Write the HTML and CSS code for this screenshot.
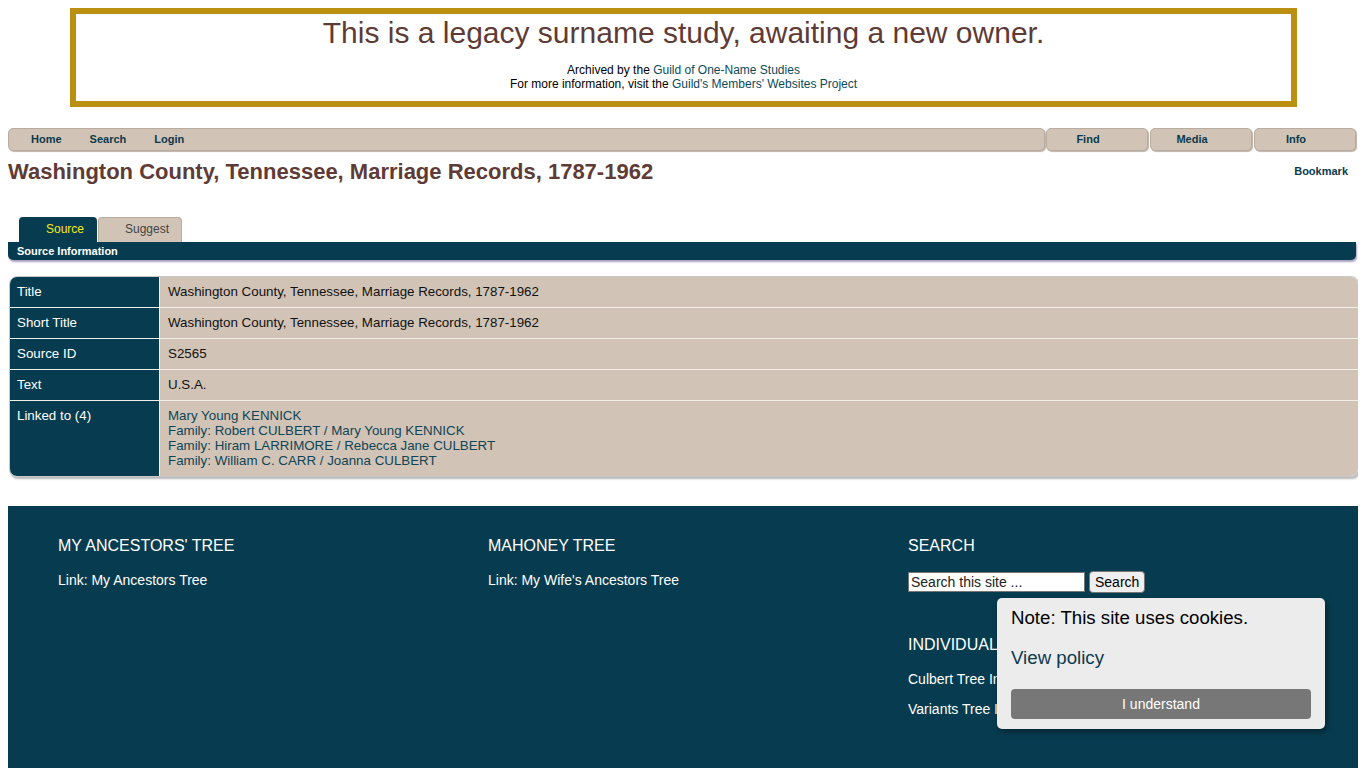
FILE: index.html
```html
<!DOCTYPE html>
<html>
<head>
<meta charset="utf-8">
<title>Washington County, Tennessee, Marriage Records, 1787-1962</title>
<link rel="stylesheet" href="styles.css">
</head>
<body>
<div class="banner">
  <div class="banner-title">This is a legacy surname study, awaiting a new owner.</div>
  <div class="banner-sub">Archived by the <a href="#">Guild of One-Name Studies</a><br>For more information, visit the <a href="#">Guild's Members' Websites Project</a></div>
</div>

<nav class="nav">
  <div class="nav-main">
    <a href="#">Home</a>
    <a href="#">Search</a>
    <a href="#">Login</a>
  </div>
  <a class="nav-btn" href="#">Find</a>
  <a class="nav-btn" href="#">Media</a>
  <a class="nav-btn" href="#">Info</a>
</nav>

<div class="page-head">
  <h1>Washington County, Tennessee, Marriage Records, 1787-1962</h1>
  <a class="bookmark" href="#">Bookmark</a>
</div>

<div class="tabs">
  <a class="tab active" href="#">Source</a>
  <a class="tab" href="#">Suggest</a>
</div>
<div class="section-bar">Source Information</div>

<div class="info-wrap">
<table class="info">
  <tr><th>Title</th><td>Washington County, Tennessee, Marriage Records, 1787-1962</td></tr>
  <tr><th>Short Title</th><td>Washington County, Tennessee, Marriage Records, 1787-1962</td></tr>
  <tr><th>Source ID</th><td>S2565</td></tr>
  <tr><th>Text</th><td>U.S.A.</td></tr>
  <tr class="linked"><th>Linked to (4)</th><td>
    <a href="#">Mary Young KENNICK</a><br>
    <a href="#">Family: Robert CULBERT / Mary Young KENNICK</a><br>
    <a href="#">Family: Hiram LARRIMORE / Rebecca Jane CULBERT</a><br>
    <a href="#">Family: William C. CARR / Joanna CULBERT</a>
  </td></tr>
</table>
</div>

<footer class="footer">
  <div class="fcol">
    <h3>MY ANCESTORS' TREE</h3>
    <a href="#">Link: My Ancestors Tree</a>
  </div>
  <div class="fcol">
    <h3>MAHONEY TREE</h3>
    <a href="#">Link: My Wife's Ancestors Tree</a>
  </div>
  <div class="fcol">
    <h3>SEARCH</h3>
    <form class="fsearch">
      <input type="text" placeholder="Search this site ...">
      <button type="button">Search</button>
    </form>
    <h3 class="fh2">INDIVIDUAL TREES</h3>
    <a class="fl" href="#">Culbert Tree Index</a>
    <a class="fl" href="#">Variants Tree Index</a>
  </div>
  <div class="cookie">
    <div class="cookie-note">Note: This site uses cookies.</div>
    <a class="cookie-link" href="#">View policy</a>
    <button class="cookie-btn" type="button">I understand</button>
  </div>
</footer>
</body>
</html>
```

FILE: styles.css
```css
body {
  margin: 8px;
  font-family: "Liberation Sans", Arial, sans-serif;
  background: #fff;
  color: #000;
}
a { text-decoration: none; }

.banner {
  margin: 0 61px 0 62px;
  border: 6px solid #bb9010;
  height: 87px;
  text-align: center;
  box-sizing: content-box;
}
.banner-title {
  font-size: 30px;
  color: #5e3b36;
  margin-top: 1px;
  line-height: 36px;
}
.banner-sub {
  font-size: 12px;
  line-height: 14px;
  margin-top: 12px;
  color: #000;
}
.banner-sub a { color: #0b4a5a; }

.nav {
  display: flex;
  margin-top: 21px;
  margin-right: 2px;
  height: 23px;
  gap: 1px;
}
.nav-main, .nav-btn {
  background: #d1c3b6;
  border: 1px solid #b8ab9f;
  border-radius: 5px;
  box-shadow: 1px 1px 1px #bfb3a8;
  box-sizing: border-box;
  height: 23px;
  font-size: 11px;
  font-weight: bold;
  line-height: 20px;
}
.nav a { color: #0b3a4c; }
.nav-main {
  flex: 1;
  display: flex;
  gap: 28px;
  padding-left: 22px;
}
.nav-btn {
  width: 102px;
  text-align: center;
  line-height: 21px;
  padding-right: 18px;
  margin-left: 1px;
}
.nav-main + .nav-btn { margin-left: 0; }

.page-head {
  display: flex;
  justify-content: space-between;
  align-items: flex-start;
  margin-top: 8px;
}
.page-head h1 {
  margin: 0;
  font-size: 22px;
  color: #5e3b36;
  line-height: 26px;
}
.bookmark {
  font-size: 11px;
  font-weight: bold;
  color: #0b3a4c;
  margin-right: 10px;
  margin-top: 6px;
}

.tabs {
  display: flex;
  margin-top: 32px;
  padding-left: 11px;
  gap: 1px;
}
.tab {
  display: block;
  height: 25px;
  box-sizing: border-box;
  border-radius: 4px 4px 0 0;
  font-size: 12px;
  line-height: 24px;
  text-align: center;
  padding-left: 14px;
}
.tab.active {
  width: 78px;
  background: #073c50;
  color: #f5e81a;
}
.tab:not(.active) {
  width: 84px;
  background: #d1c3b6;
  color: #444;
  border: 1px solid #b8ab9f;
  border-bottom: none;
  line-height: 23px;
}
.section-bar {
  background: #073c50;
  color: #fff;
  font-size: 11px;
  font-weight: bold;
  height: 18px;
  line-height: 18px;
  padding-left: 9px;
  margin-right: 2px;
  border-radius: 0 0 5px 5px;
  box-shadow: 1px 2px 2px #a9a0c0;
}

.info-wrap {
  margin: 16px -1px 0 1px;
  border: 1px solid #c8c8c8;
  border-radius: 8px;
  box-shadow: 1px 2px 2px #b8b8b8;
  overflow: hidden;
  background: #fff;
}
.info {
  width: 100%;
  border-collapse: separate;
  border-spacing: 0;
  font-size: 13.33px;
}
.info th, .info td {
  height: 31px;
  padding: 0 8px 1px 7px;
  box-sizing: border-box;
  text-align: left;
  vertical-align: middle;
  border-bottom: 1px solid #f2efe9;
}
.info td { padding-left: 8px; }
.info tr:last-child th, .info tr:last-child td { border-bottom: none; }
.info th {
  width: 150px;
  background: #073c50;
  color: #fff;
  font-weight: normal;
  border-right: 1px solid #f2efe9;
}
.info td {
  background: #d1c3b6;
  color: #111;
}
.info .linked th, .info .linked td {
  vertical-align: top;
  padding-top: 7px;
  padding-bottom: 8px;
  height: 75px;
  line-height: 15px;
}
.info a { color: #0f4656; }

.footer {
  position: relative;
  margin-top: 29px;
  background: #073c50;
  color: #fff;
  display: grid;
  grid-template-columns: 430px 420px 1fr;
  padding: 31px 50px 60px;
  min-height: 200px;
  margin-bottom: 0;
}
.fcol h3 {
  margin: 0 0 16px;
  font-size: 16px;
  font-weight: normal;
  line-height: 18px;
}
.fcol a {
  color: #fff;
  font-size: 14px;
}
.fsearch {
  display: flex;
  align-items: center;
  gap: 4px;
  margin-top: 1px;
}
.fsearch input {
  width: 177px;
  height: 20px;
  box-sizing: border-box;
  border: 1px solid #767676;
  font-family: inherit;
  font-size: 14px;
  padding: 1px 2px;
  margin: 0;
}
.fsearch input::placeholder { color: #222; }
.fsearch button {
  height: 22px;
  font-family: inherit;
  font-size: 14px;
  background: #efefef;
  border: 1px solid #767676;
  border-radius: 4px;
  padding: 0 5px;
  color: #000;
}
.fh2 { margin-top: 43px !important; margin-bottom: 17px !important; }
.fl { display: block; margin-bottom: 14px; }

.cookie {
  position: absolute;
  left: 989px;
  top: 92px;
  width: 328px;
  box-sizing: border-box;
  padding: 9px 14px 10px;
  background: #ececec;
  border-radius: 5px;
  box-shadow: 2px 3px 6px rgba(0,0,0,0.4);
  color: #000;
}
.cookie-note {
  font-size: 18.67px;
  line-height: 22px;
}
.cookie-link {
  display: block;
  font-size: 18.67px;
  line-height: 22px;
  margin-top: 18px;
  color: #0b3a4c;
}
.cookie-btn {
  display: block;
  width: 100%;
  margin-top: 20px;
  height: 30px;
  border: none;
  border-radius: 4px;
  background: #777;
  color: #fff;
  font-family: inherit;
  font-size: 14px;
}
```
